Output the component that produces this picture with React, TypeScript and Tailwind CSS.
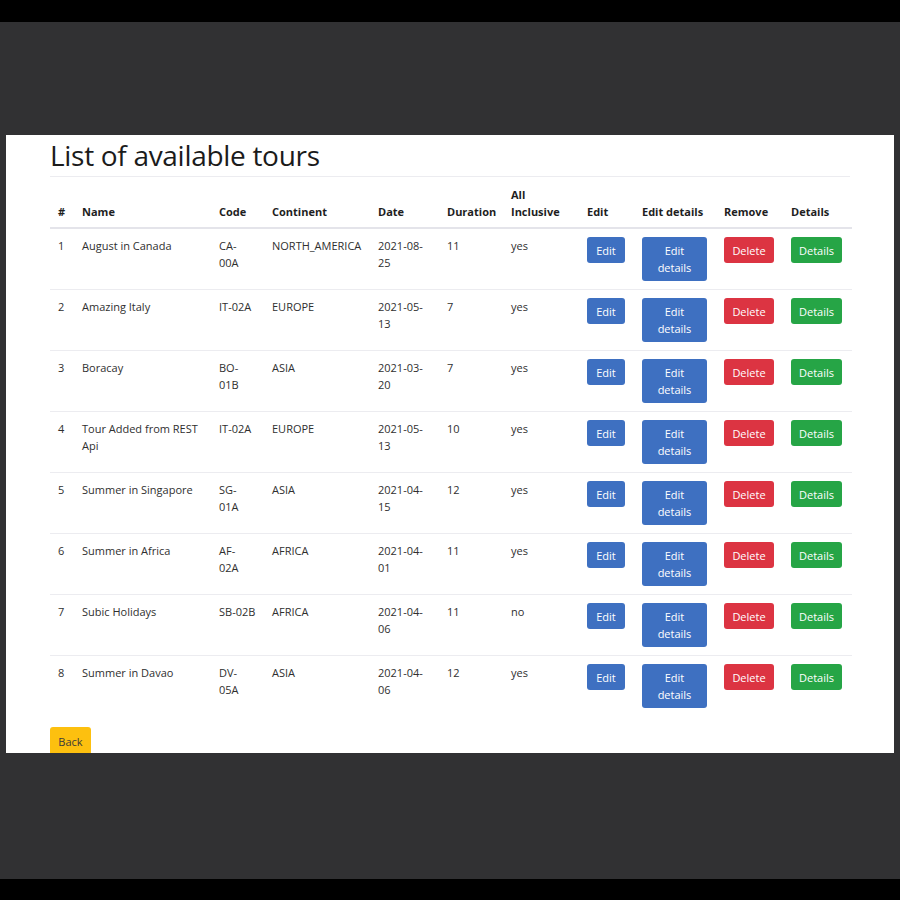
const tours = [
  { id: 1, name: ["August in Canada"], code: ["CA-", "00A"], continent: "NORTH_AMERICA", date: "2021-08-25", duration: 11, inclusive: "yes" },
  { id: 2, name: ["Amazing Italy"], code: ["IT-02A"], continent: "EUROPE", date: "2021-05-13", duration: 7, inclusive: "yes" },
  { id: 3, name: ["Boracay"], code: ["BO-", "01B"], continent: "ASIA", date: "2021-03-20", duration: 7, inclusive: "yes" },
  { id: 4, name: ["Tour Added from REST", "Api"], code: ["IT-02A"], continent: "EUROPE", date: "2021-05-13", duration: 10, inclusive: "yes" },
  { id: 5, name: ["Summer in Singapore"], code: ["SG-", "01A"], continent: "ASIA", date: "2021-04-15", duration: 12, inclusive: "yes" },
  { id: 6, name: ["Summer in Africa"], code: ["AF-", "02A"], continent: "AFRICA", date: "2021-04-01", duration: 11, inclusive: "yes" },
  { id: 7, name: ["Subic Holidays"], code: ["SB-02B"], continent: "AFRICA", date: "2021-04-06", duration: 11, inclusive: "no" },
  { id: 8, name: ["Summer in Davao"], code: ["DV-", "05A"], continent: "ASIA", date: "2021-04-06", duration: 12, inclusive: "yes" },
];

const widths = [24, 137, 53, 106, 69, 64, 76, 55, 82, 67, 69];

function Lines({ parts }: { parts: string[] }) {
  return (
    <>
      {parts.map((p, i) => (
        <div key={i} className="whitespace-nowrap">
          {p}
        </div>
      ))}
    </>
  );
}

export default function App() {
  return (
    <div
      className="h-[900px] bg-black pt-[22px] text-[#2f2f2f]"
      style={{ fontFamily: "'Open Sans', 'Noto Sans', sans-serif" }}
    >
      <div className="h-[857px] bg-[#313133] pt-[113px] pl-[6px] pr-[6px]">
        <div className="h-[618px] overflow-hidden bg-white px-[44px]">
          <h1 className="mt-[4px] border-b border-[#ececf0] pb-[4px] text-[28px] leading-[33px] font-normal tracking-[-0.3px] text-[#1b1b1b]">
            List of available tours
          </h1>

          <table className="mt-[1px] w-[802px] table-fixed border-collapse text-[11px] leading-[17px]">
            <colgroup>
              {widths.map((w, i) => (
                <col key={i} style={{ width: w }} />
              ))}
            </colgroup>
            <thead>
              <tr className="border-b-2 border-[#e4e4ea]">
                {["#", "Name", "Code", "Continent", "Date", "Duration", "All Inclusive", "Edit", "Edit details", "Remove", "Details"].map((h) => (
                  <th key={h} className="h-[50px] px-[8px] pb-[7px] text-left align-bottom font-bold text-[#1e1e1e]">
                    {h === "All Inclusive" ? (
                      <>
                        All
                        <br />
                        Inclusive
                      </>
                    ) : (
                      <span className="whitespace-nowrap">{h}</span>
                    )}
                  </th>
                ))}
              </tr>
            </thead>
            <tbody>
              {tours.map((t, i) => (
                <tr key={t.id} className={i < tours.length - 1 ? "border-b border-[#ececf0] align-top" : "align-top"}>
                  <td className="px-[8px] pt-[8px]">{t.id}</td>
                  <td className="px-[8px] pt-[8px]">
                    <Lines parts={t.name} />
                  </td>
                  <td className="px-[8px] pt-[8px]">
                    <Lines parts={t.code} />
                  </td>
                  <td className="px-[8px] pt-[8px]">{t.continent}</td>
                  <td className="px-[8px] pt-[8px]">
                    <Lines parts={[t.date.slice(0, 8), t.date.slice(8)]} />
                  </td>
                  <td className="px-[8px] pt-[8px]">{t.duration}</td>
                  <td className="px-[8px] pt-[8px]">{t.inclusive}</td>
                  <td className="px-[8px] py-[8px]">
                    <button className="h-[26px] w-[38px] rounded-[3px] bg-[#3e70c1] text-[11px] text-white">Edit</button>
                  </td>
                  <td className="px-[8px] py-[8px]">
                    <button className="flex h-[44px] w-[65px] flex-col items-center justify-center rounded-[3px] bg-[#3e70c1] text-[11px] leading-[17px] text-white">
                      <span>Edit</span>
                      <span>details</span>
                    </button>
                  </td>
                  <td className="px-[8px] py-[8px]">
                    <button className="h-[26px] w-[50px] rounded-[3px] bg-[#dc3442] text-[11px] text-white">Delete</button>
                  </td>
                  <td className="px-[8px] py-[8px]">
                    <button className="h-[26px] w-[51px] rounded-[3px] bg-[#26a546] text-[11px] text-white">Details</button>
                  </td>
                </tr>
              ))}
            </tbody>
          </table>

          <button className="mt-[11px] h-[30px] w-[41px] rounded-[3px] bg-[#fdc00f] text-[11px] text-[#3a3a3a]">Back</button>
        </div>
      </div>
    </div>
  );
}
